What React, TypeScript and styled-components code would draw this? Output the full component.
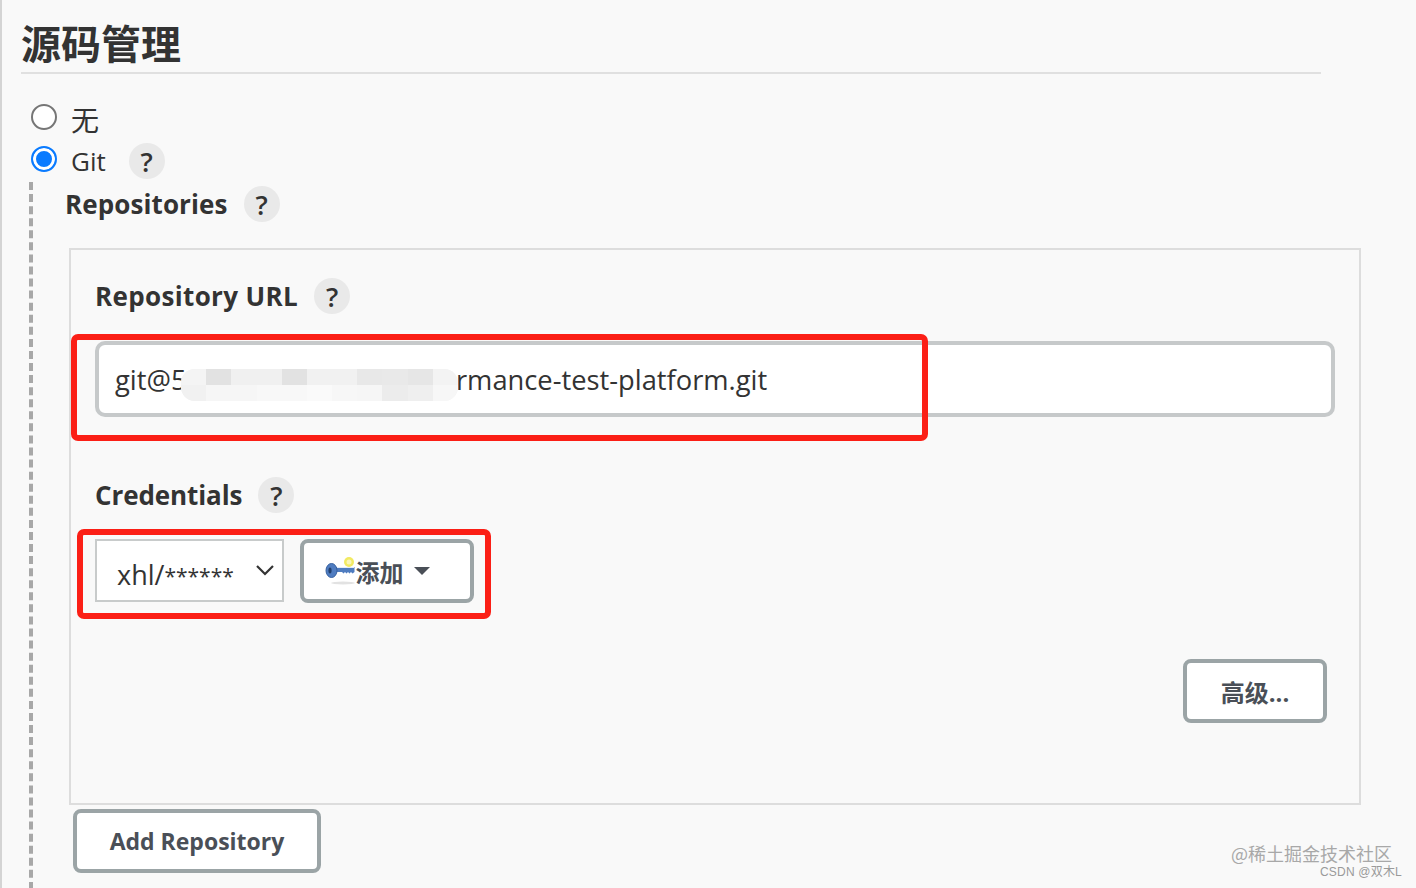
import styled, { createGlobalStyle } from "styled-components";

const GlobalStyle = createGlobalStyle`
  html, body {
    margin: 0;
    padding: 0;
    background: #f9f9f9;
  }
  body {
    font-family: "Open Sans", "Noto Sans CJK SC", sans-serif;
    color: #333;
  }
`;

const Page = styled.div`
  position: relative;
  width: 1416px;
  height: 888px;
  box-sizing: border-box;
  overflow: hidden;
  border-left: 2px solid #d4d4d4;
  padding: 0 0 0 19px;
`;

const SectionTitle = styled.h2`
  width: 1300px;
  height: 74px;
  box-sizing: border-box;
  margin: 0;
  padding-top: 12px;
  font-size: 40px;
  line-height: 60px;
  font-weight: 700;
  color: #333;
  border-bottom: 2px solid #e0e0e0;
  font-family: "Noto Sans CJK SC", sans-serif;
`;

const RadioRow = styled.label<{ $top: number }>`
  display: flex;
  align-items: center;
  height: 42px;
  margin-top: ${(p) => p.$top}px;
  padding-left: 10px;
  font-size: 26px;
  color: #333;
`;

const Radio = styled.span<{ $checked?: boolean }>`
  width: 26px;
  height: 26px;
  box-sizing: border-box;
  border-radius: 50%;
  background: ${(p) => (p.$checked ? "#0a7bff" : "#fff")};
  border: 2px solid ${(p) => (p.$checked ? "#0a7bff" : "#767676")};
  box-shadow: ${(p) => (p.$checked ? "inset 0 0 0 3px #fff" : "none")};
  margin-right: 14px;
  position: relative;
  top: -2px;
`;

const RadioText = styled.span<{ $cjk?: boolean }>`
  font-family: ${(p) => (p.$cjk ? '"Noto Sans CJK SC"' : '"Open Sans"')}, sans-serif;
  font-size: ${(p) => (p.$cjk ? 28 : 26)}px;
  font-weight: 400;
`;

const Help = styled.span<{ $gap: number }>`
  display: inline-flex;
  align-items: center;
  justify-content: center;
  flex: none;
  width: 36px;
  height: 36px;
  margin-left: ${(p) => p.$gap}px;
  border-radius: 50%;
  background: #e9e9e9;
  font-size: 27px;
  font-weight: 600;
  letter-spacing: 0;
  color: #333;
`;

const Nested = styled.div`
  margin-left: 8px;
  border-left: 4px dashed #a8a8a8;
  padding-left: 32px;
  height: 720px;
`;

const FieldLabel = styled.div<{ $tracking?: number; $top?: number }>`
  display: flex;
  align-items: center;
  height: 44px;
  margin-top: ${(p) => p.$top ?? 0}px;
  font-size: 26px;
  font-weight: 700;
  letter-spacing: ${(p) => p.$tracking ?? 0}px;
  color: #333;
`;

const RepoPanel = styled.div`
  width: 1292px;
  height: 557px;
  box-sizing: border-box;
  margin: 22px 0 0 4px;
  border: 2px solid #ddd;
  padding: 24px 24px 0 24px;
`;

const UrlInput = styled.div`
  position: relative;
  display: flex;
  align-items: center;
  width: 1240px;
  height: 76px;
  box-sizing: border-box;
  margin-top: 23px;
  padding-left: 16px;
  background: #fff;
  border: 4px solid #c6c9ca;
  border-radius: 10px;
  font-size: 27.3px;
  color: #333;
`;

const MaskedPart = styled.span`
  flex: none;
  width: 253px;
`;

const BlurStrip = styled.div`
  position: absolute;
  left: 82px;
  top: 24px;
  width: 277px;
  height: 32px;
  display: grid;
  grid-template-columns: repeat(11, 1fr);
  grid-template-rows: 1fr 1fr;
  border-radius: 14px;
  overflow: hidden;
  background: #f3f3f3;
`;

const BlurCell = styled.span<{ $shade: string }>`
  background: ${(p) => p.$shade};
`;

const CredRow = styled.div`
  display: flex;
  gap: 16px;
  margin-top: 22px;
`;

const SelectBox = styled.div`
  display: flex;
  align-items: center;
  justify-content: space-between;
  width: 189px;
  height: 63px;
  box-sizing: border-box;
  padding: 8px 7px 0 20px;
  background: #fff;
  border: 2px solid #c8cbcb;
  font-size: 27px;
  color: #333;
`;

const Stars = styled.span`
  font-size: 21px;
  vertical-align: 1px;
`;

const Button = styled.div<{ $w: number; $size?: number; $shift?: number }>`
  display: inline-flex;
  align-items: center;
  justify-content: center;
  width: ${(p) => p.$w}px;
  height: 64px;
  box-sizing: border-box;
  padding-right: ${(p) => p.$shift ?? 0}px;
  background: #fff;
  border: 4px solid #9ba4a6;
  border-radius: 8px;
  font-size: ${(p) => p.$size ?? 24}px;
  font-weight: 700;
  color: #4a4f57;
`;

const AdvancedRow = styled.div`
  display: flex;
  justify-content: flex-end;
  width: 1232px;
  margin-top: 56px;
`;

const AddRow = styled.div`
  margin: 4px 0 0 8px;
`;

const Caret = styled.span`
  width: 0;
  height: 0;
  margin-left: 10px;
  border-left: 8px solid transparent;
  border-right: 8px solid transparent;
  border-top: 8px solid #4a4f57;
`;

const Annotation = styled.div<{ $x: number; $y: number; $w: number; $h: number }>`
  position: absolute;
  left: ${(p) => p.$x}px;
  top: ${(p) => p.$y}px;
  width: ${(p) => p.$w}px;
  height: ${(p) => p.$h}px;
  box-sizing: border-box;
  border: 6px solid #fb1f16;
  border-radius: 7px;
  pointer-events: none;
`;

const Watermark = styled.div`
  position: absolute;
  right: 24px;
  bottom: 23px;
  font-size: 18px;
  line-height: 24px;
  color: #a8a8a8;
  font-family: "Noto Sans CJK SC", sans-serif;
`;

const SubWatermark = styled.div`
  position: absolute;
  right: 14px;
  bottom: 8px;
  font-size: 12px;
  line-height: 16px;
  letter-spacing: 0.2px;
  color: #9a9a9a;
  font-family: "Liberation Sans", "Noto Sans CJK SC", sans-serif;
`;

const blurShades = [
  "#f4f4f4", "#e2e2e2", "#f0f0f0", "#f0f0f0", "#e2e2e2", "#f1f1f1", "#f1f1f1", "#e8e8e8", "#e9e9e9", "#e6e6e6", "#f3f3f3",
  "#f1f1f1", "#f6f6f6", "#f6f6f6", "#f8f8f8", "#f8f8f8", "#fafafa", "#f7f7f7", "#f6f6f6", "#ececec", "#efefef", "#f7f7f7",
];

const KeyIcon = () => (
  <svg width="31" height="30" viewBox="0 0 31 30" style={{ flex: "none" }}>
    <ellipse cx="18" cy="27" rx="12" ry="1.5" fill="#e2e2e2" />
    <circle cx="24" cy="6" r="5" fill="#f2ea62" />
    <circle cx="24" cy="6" r="2.5" fill="#faf6b8" />
    <path d="M11 11h18.5v5l-2 1.5-1.5-1.5-1.5 1.5-1.5-1.5-1.5 1.5-1.5-1.5-1.5 1.5-1.5-1.5H11z" fill="#4f7cc0" />
    <path d="M12 11.5h17" stroke="#e4ecf8" strokeWidth="1" />
    <ellipse cx="6.5" cy="14.5" rx="5.5" ry="7" fill="#4f7cc0" stroke="#345f9f" strokeWidth="1" />
    <ellipse cx="5" cy="14.5" rx="1.6" ry="3" fill="#22406f" />
  </svg>
);

const Chevron = () => (
  <svg width="20" height="12" viewBox="0 0 20 12" fill="none" style={{ marginTop: -10 }}>
    <path d="M2 2l8 8 8-8" stroke="#333" strokeWidth="2.2" />
  </svg>
);

export default function App() {
  return (
    <>
      <GlobalStyle />
      <Page>
        <SectionTitle>源码管理</SectionTitle>
        <RadioRow $top={24}>
          <Radio />
          <RadioText $cjk>无</RadioText>
        </RadioRow>
        <RadioRow $top={0}>
          <Radio $checked />
          <RadioText>Git</RadioText>
          <Help $gap={23}>?</Help>
        </RadioRow>
        <Nested>
          <FieldLabel $tracking={0.1}>
            Repositories
            <Help $gap={16}>?</Help>
          </FieldLabel>
          <RepoPanel>
            <FieldLabel $tracking={0.35}>
              Repository URL
              <Help $gap={16}>?</Help>
            </FieldLabel>
            <UrlInput>
              git@5
              <MaskedPart />
              ormance-test-platform.git
              <BlurStrip>
                {blurShades.map((shade, i) => (
                  <BlurCell key={i} $shade={shade} />
                ))}
              </BlurStrip>
            </UrlInput>
            <FieldLabel $top={56} $tracking={-0.1}>
              Credentials
              <Help $gap={16}>?</Help>
            </FieldLabel>
            <CredRow>
              <SelectBox>
                <span>
                  xhl/<Stars>******</Stars>
                </span>
                <Chevron />
              </SelectBox>
              <Button $w={174} $shift={20}>
                <KeyIcon />
                添加
                <Caret />
              </Button>
            </CredRow>
            <AdvancedRow>
              <Button $w={144}>高级...</Button>
            </AdvancedRow>
          </RepoPanel>
          <AddRow>
            <Button $w={248} $size={23}>
              Add Repository
            </Button>
          </AddRow>
        </Nested>
        <Annotation $x={69} $y={334} $w={857} $h={107} />
        <Annotation $x={75} $y={529} $w={414} $h={90} />
        <Watermark>@稀土掘金技术社区</Watermark>
        <SubWatermark>CSDN @双木L</SubWatermark>
      </Page>
    </>
  );
}
